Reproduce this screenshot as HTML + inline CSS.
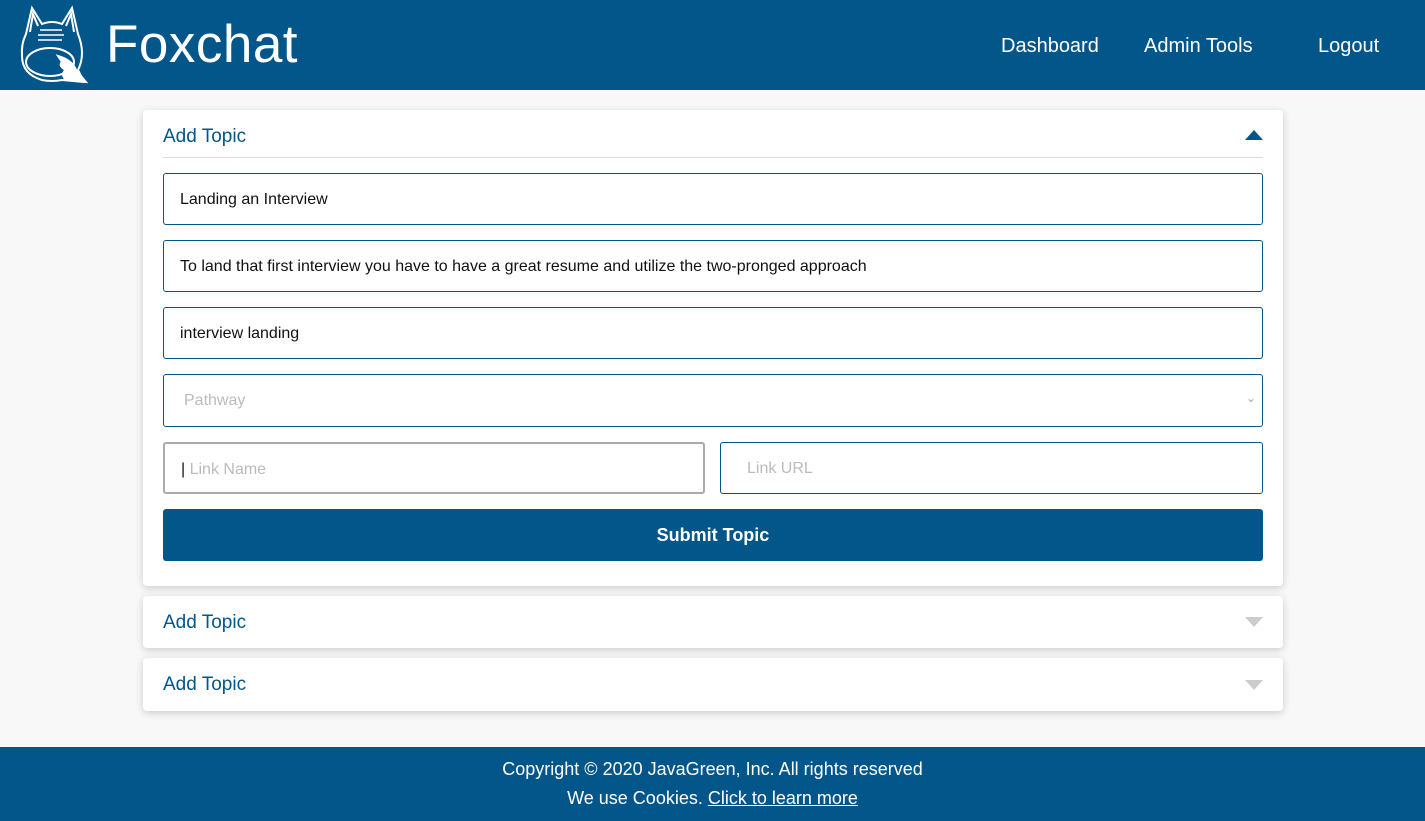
<!DOCTYPE html>
<html><head><meta charset="utf-8"><style>
*{box-sizing:border-box;margin:0;padding:0}
body{width:1425px;height:821px;background:#f8f8f8;font-family:"Liberation Sans",sans-serif;position:relative;overflow:hidden}
.hdr{position:absolute;left:0;top:0;width:1425px;height:90px;background:#02568a;color:#fff}
.brand{position:absolute;left:106px;top:14px;font-size:53px;font-weight:400;letter-spacing:0.5px}
.nav{position:absolute;top:35px;font-size:20px}
.card{position:absolute;left:143px;width:1140px;background:#fff;border-radius:4px;box-shadow:0 2px 8px rgba(0,0,0,.18)}
.ct{position:absolute;left:20px;font-size:19px;color:#02568a}
.inp{position:absolute;left:20px;width:1100px;height:52px;border:1px solid #02568a;border-radius:3px;font-size:16px;padding:17px 16px;color:#111}
.tri{position:absolute;right:20px;width:0;height:0;border-left:9px solid transparent;border-right:9px solid transparent}
.ftr{position:absolute;left:0;top:747px;width:1425px;height:74px;background:#02568a;color:#fff;text-align:center;font-size:18px}
</style></head><body>
<div class="hdr">
<svg style="position:absolute;left:16px;top:4px" width="72" height="80" viewBox="0 0 72 80" fill="none" stroke="#fff" stroke-width="2">
<path d="M10 30 L16 4 L26 20 Q36 16 46 20 L56 4 L62 30 Q70 50 62 66 L68 78 L46 76 Q36 78 26 76 Q6 70 6 52 Q5 40 10 30Z"/>
<path d="M14 28 L17 10 L22 22" /><path d="M58 28 L55 10 L50 22"/>
<path d="M24 26 H46 M22 31 H48 M22 36 H46" stroke-width="1.5"/>
<ellipse cx="34" cy="58" rx="24" ry="14"/>
<path d="M42 52 Q56 56 60 66 L70 78 L50 76 Q44 70 50 66 Q42 62 46 58 Z" fill="#fff"/>
</svg>
<div class="brand">Foxchat</div>
<div class="nav" style="left:1001px">Dashboard</div>
<div class="nav" style="left:1144px">Admin Tools</div>
<div class="nav" style="left:1318px">Logout</div>
</div>
<div class="card" style="top:110px;height:476px">
<div class="ct" style="top:16px">Add Topic</div>
<div class="tri" style="top:20px;border-bottom:10px solid #02568a"></div>
<div style="position:absolute;left:20px;top:47px;width:1100px;height:1px;background:#ddd"></div>
<div class="inp" style="top:63px">Landing an Interview</div>
<div class="inp" style="top:130px">To land that first interview you have to have a great resume and utilize the two-pronged approach</div>
<div class="inp" style="top:197px">interview landing</div>
<div class="inp" style="top:264px;height:53px;color:#bbb;padding-left:20px">Pathway<span style="position:absolute;right:6px;top:16px;font-size:12px;color:#aaa">⌄</span></div>
<div class="inp" style="top:332px;width:542px;border:2px solid #aaa;color:#bbb;padding-left:16px"><span style="color:#111">|</span> Link Name</div>
<div class="inp" style="top:332px;left:577px;width:543px;color:#bbb;padding-left:26px">Link URL</div>
<div style="position:absolute;left:20px;top:399px;width:1100px;height:52px;background:#02568a;border-radius:3px;color:#fff;font-size:18px;font-weight:bold;text-align:center;line-height:52px">Submit Topic</div>
</div>
<div class="card" style="top:596px;height:52px">
<div class="ct" style="top:16px">Add Topic</div>
<div class="tri" style="top:21px;border-top:10px solid #ccc"></div>
</div>
<div class="card" style="top:658px;height:53px">
<div class="ct" style="top:16px">Add Topic</div>
<div class="tri" style="top:22px;border-top:10px solid #ccc"></div>
</div>
<div class="ftr">
<div style="position:absolute;width:100%;top:12px">Copyright © 2020 JavaGreen, Inc. All rights reserved</div>
<div style="position:absolute;width:100%;top:41px">We use Cookies. <u>Click to learn more</u></div>
</div>
</body></html>
